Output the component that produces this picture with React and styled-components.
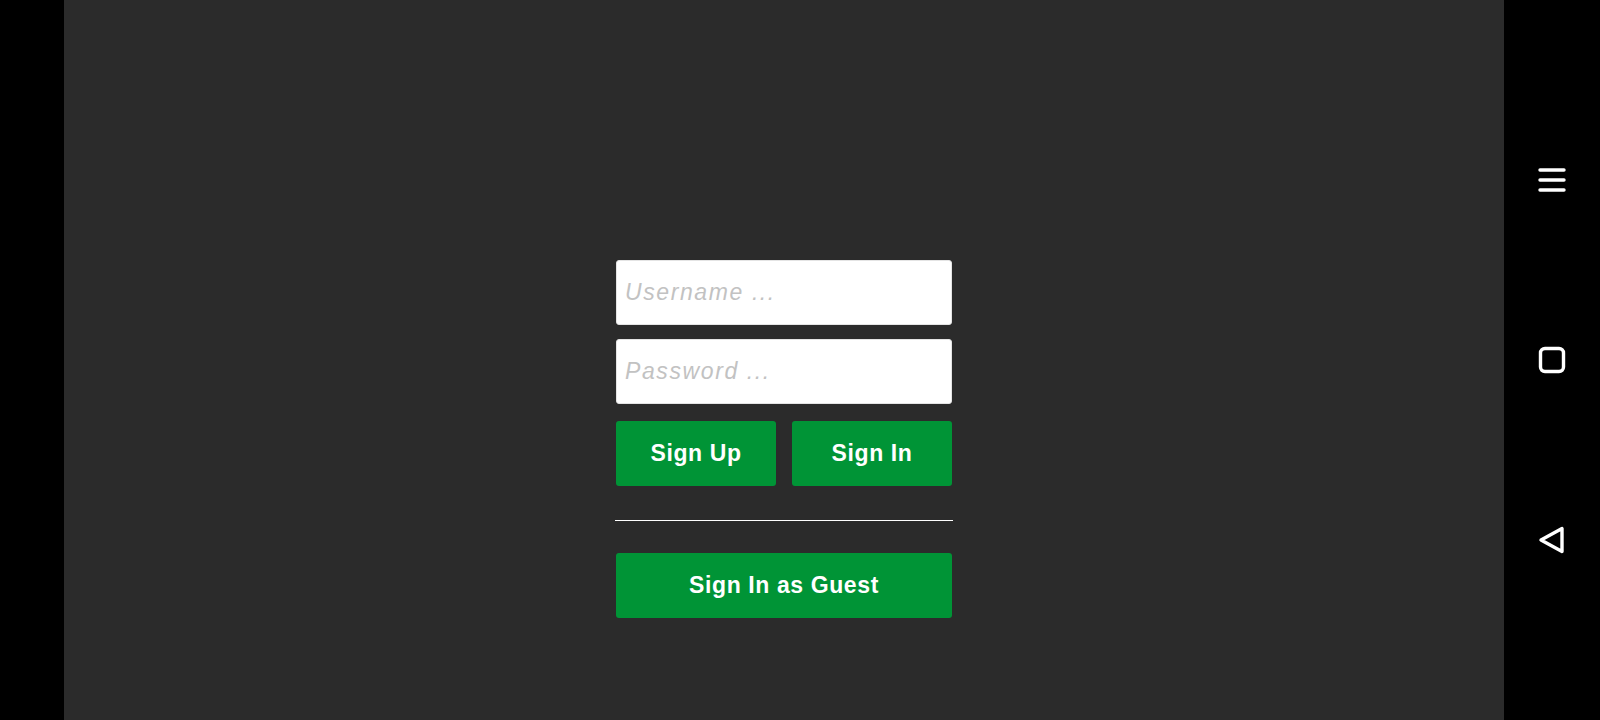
import { createGlobalStyle } from "styled-components";
import styled from "styled-components";

const GlobalStyle = createGlobalStyle`
  html, body {
    margin: 0;
    padding: 0;
    background: #000;
    font-family: "Liberation Sans", Arial, sans-serif;
  }
`;

const Frame = styled.div`
  display: flex;
  width: 1600px;
  height: 720px;
  background: #000;
  overflow: hidden;
`;

const Gutter = styled.div`
  width: 64px;
  flex-shrink: 0;
  background: #000;
`;

const Screen = styled.main`
  flex: 1;
  background: #2b2b2b;
  display: flex;
  justify-content: center;
  align-items: flex-start;
  padding-top: 260px;
`;

const Form = styled.form`
  width: 338px;
  display: flex;
  flex-direction: column;
  align-items: center;
`;

const Field = styled.input`
  box-sizing: border-box;
  width: 336px;
  height: 65px;
  margin-bottom: ${(p) => p.$gap || 0}px;
  padding: 0 8px;
  border: 1px solid #e4e4e4;
  border-radius: 3px;
  background: #fff;
  font-family: "Liberation Sans", Arial, sans-serif;
  font-size: 23px;
  letter-spacing: 1.6px;
  color: #333;
  outline: none;

  &::placeholder {
    color: #c2c2c2;
    font-style: italic;
  }
`;

const ButtonRow = styled.div`
  display: flex;
  gap: 16px;
  width: 336px;
  margin-top: 17px;
`;

const Button = styled.button`
  box-sizing: border-box;
  width: ${(p) => p.$width}px;
  height: 65px;
  border: none;
  border-radius: 3px;
  background: #009436;
  color: #fff;
  font-family: "Liberation Sans", Arial, sans-serif;
  font-weight: bold;
  font-size: 23px;
  letter-spacing: 0.6px;
  cursor: pointer;
`;

const Divider = styled.hr`
  width: 338px;
  height: 0;
  margin: 34px 0 32px;
  border: none;
  border-top: 1px solid #fff;
`;

const NavBar = styled.nav`
  width: 96px;
  flex-shrink: 0;
  background: #000;
  display: flex;
  flex-direction: column;
  align-items: center;
  justify-content: center;
  gap: 150px;
`;

const NavIcon = styled.svg`
  display: block;
  width: 30px;
  height: 30px;
  color: #fff;
`;

export default function App() {
  return (
    <>
      <GlobalStyle />
      <Frame>
        <Gutter />
        <Screen>
          <Form onSubmit={(e) => e.preventDefault()}>
            <Field $gap={14} type="text" placeholder="Username ..." />
            <Field type="password" placeholder="Password ..." />
            <ButtonRow>
              <Button $width={160} type="button">Sign Up</Button>
              <Button $width={160} type="button">Sign In</Button>
            </ButtonRow>
            <Divider />
            <Button $width={336} type="button">Sign In as Guest</Button>
          </Form>
        </Screen>
        <NavBar>
          <NavIcon viewBox="0 0 30 30" fill="none" stroke="currentColor" strokeWidth="3.4" strokeLinecap="round">
            <path d="M3 5h24M3 15h24M3 25h24" />
          </NavIcon>
          <NavIcon viewBox="0 0 30 30" fill="none" stroke="currentColor" strokeWidth="3.4">
            <rect x="3.5" y="3.5" width="23" height="23" rx="4.5" />
          </NavIcon>
          <NavIcon viewBox="0 0 30 30" fill="none" stroke="currentColor" strokeWidth="3.4" strokeLinejoin="round">
            <path d="M25 3.5v23L4 15z" />
          </NavIcon>
        </NavBar>
      </Frame>
    </>
  );
}
